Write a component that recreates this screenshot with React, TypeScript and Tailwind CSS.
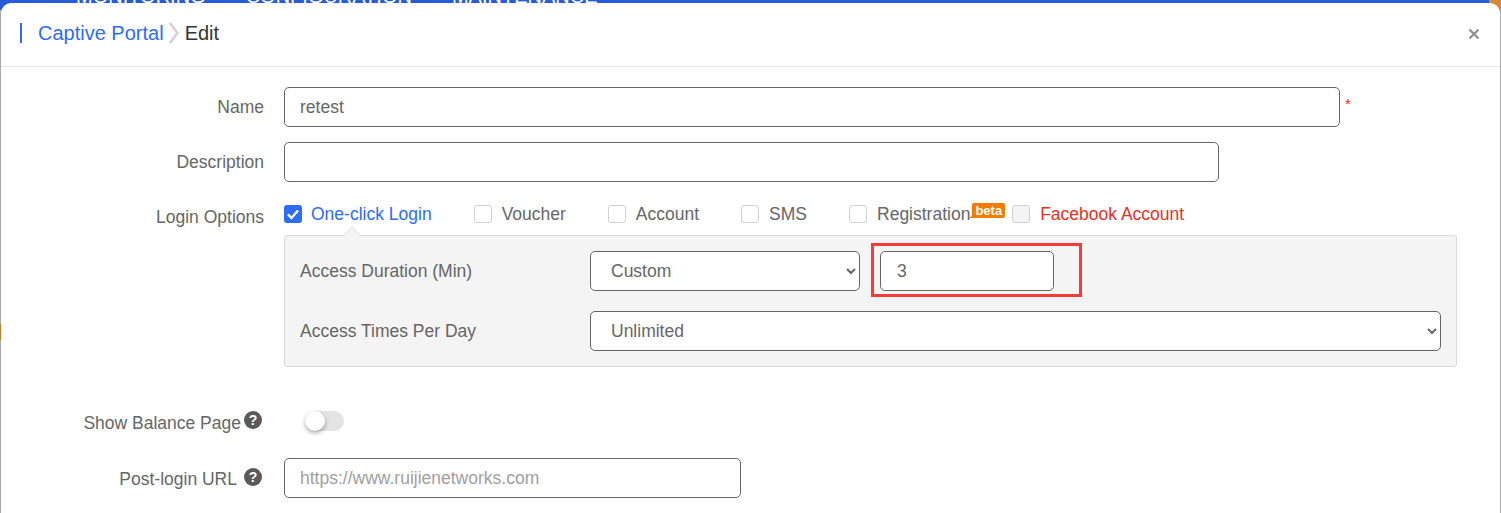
import React from "react";

function Help() {
  return (
    <svg width="18" height="18" viewBox="0 0 18 18" className="shrink-0">
      <circle cx="9" cy="9" r="9" fill="#5a5a5a" />
      <text x="9" y="14" textAnchor="middle" fontSize="14" fontWeight="700" fill="#fff" fontFamily="Liberation Sans">?</text>
    </svg>
  );
}

function Check({ checked, disabled, label, className, gap }: { checked?: boolean; disabled?: boolean; label: string; className: string; gap: string }) {
  return (
    <div className={`flex items-center ${gap}`}>
      {checked ? (
        <span className="flex h-[18px] w-[18px] items-center justify-center rounded-[3px] bg-[#2f6cf6]">
          <svg width="14" height="14" viewBox="0 0 14 14" fill="none" stroke="#fff" strokeWidth="2.4"><path d="M2 7.4 5.5 11 12 3.5" /></svg>
        </span>
      ) : (
        <span className={`h-[18px] w-[18px] rounded-[3px] border border-[#d0d0d0] ${disabled ? "bg-[#f3f3f3]" : "bg-white"}`} />
      )}
      <span className={`text-[17.5px] leading-[20px] ${className}`}>{label}</span>
    </div>
  );
}

const box = "h-[40px] rounded-[5px] border border-[#666] bg-white px-[15px] text-[17.5px] text-[#666] outline-none";

export default function App() {
  return (
    <div className="relative h-[513px] w-[1501px] overflow-hidden bg-[#a9a9a9] font-['Liberation_Sans',Arial,sans-serif]">
      <div className="flex h-[10px] items-end gap-[40px] overflow-hidden bg-[#2a5bd7] pl-[76px] text-[20px] leading-[26px] text-white">
        <span className="-translate-y-[1px]">MONITORING</span>
        <span className="-translate-y-[1px]">CONFIGURATION</span>
        <span className="-translate-y-[1px]">MAINTENANCE</span>
      </div>
      <div className="absolute left-0 top-[324px] h-[16px] w-[2px] bg-[#c47a35]" />
      <div className="absolute right-0 top-0 h-[10px] w-[12px] bg-[#d08a38]" />
      <div className="absolute left-[1px] top-[3px] h-[520px] w-[1499px] rounded-t-[10px] bg-white">
        <div className="flex h-[64px] items-center border-b border-[#e5e5e5] pb-[3px] pl-[19px] pr-[19px]">
          <span className="h-[20px] w-[2px] bg-[#2f6cf6]" />
          <span className="ml-[16px] text-[20px] text-[#2f6cf6]">Captive Portal</span>
          <svg width="12" height="24" viewBox="0 0 12 24" fill="none" stroke="#d2d2d2" strokeWidth="2.6" className="ml-[4px]"><path d="M2 2l7.5 10L2 22" /></svg>
          <span className="ml-[5px] text-[20px] text-[#333]">Edit</span>
          <svg width="12" height="12" viewBox="0 0 12 12" fill="none" stroke="#8f8f8f" strokeWidth="2.2" className="ml-auto mr-[1px] mt-[1px]"><path d="M1.5 1.5l9 9M10.5 1.5l-9 9" /></svg>
        </div>

        <div className="flex flex-col pt-[20px]">
          <div className="flex h-[40px] items-center">
            <label className="w-[263px] text-right text-[17.5px] text-[#666]">Name</label>
            <input readOnly value="retest" className={`${box} ml-[20px] w-[1056px]`} />
            <span className="mb-[7px] ml-[5px] text-[15px] leading-none text-[#f5222d]">*</span>
          </div>
          <div className="mt-[15px] flex h-[40px] items-center">
            <label className="w-[263px] text-right text-[17.5px] text-[#666]">Description</label>
            <input readOnly className={`${box} ml-[20px] w-[935px]`} />
          </div>
          <div className="mt-[24px] flex items-start">
            <label className="w-[263px] pt-[1px] text-right text-[17.5px] leading-[20px] text-[#666]">Login Options</label>
            <div className="ml-[20px] w-[1173px]">
              <div className="flex h-[20px] items-center -translate-y-[2px]">
                <Check gap="gap-[9px]" checked label="One-click Login" className="text-[#2f6cf6]" />
                <div className="ml-[42px]"><Check gap="gap-[10px]" label="Voucher" className="text-[#666]" /></div>
                <div className="ml-[42px]"><Check gap="gap-[10px]" label="Account" className="text-[#666]" /></div>
                <div className="ml-[42px]"><Check gap="gap-[10px]" label="SMS" className="text-[#666]" /></div>
                <div className="ml-[42px]"><Check gap="gap-[10px]" label="Registration" className="text-[#666]" /></div>
                <span className="relative -top-[4px] ml-[2px] rounded-[2px] bg-[#f07c00] px-[3px] text-[13px] font-bold leading-[15px] text-white">
                  beta
                  <span className="absolute -left-[3px] bottom-0 h-0 w-0 border-b-[3px] border-l-[4px] border-b-[#f07c00] border-l-transparent" />
                </span>
                <div className="ml-[7px]"><Check gap="gap-[10px]" disabled label="Facebook Account" className="text-[#e8321f]" /></div>
              </div>
              <div className="relative mt-[9px] h-[132px] rounded-[3px] border border-[#d9d9d9] bg-[#f4f4f4] pl-[15px] pt-[15px]">
                <span className="absolute -top-[7px] left-[61px] h-[12px] w-[12px] rotate-45 border-l border-t border-[#e8e8e8] bg-[#f4f4f4]" />
                <div className="flex h-[40px] items-center">
                  <span className="w-[290px] text-[17.5px] text-[#666]">Access Duration (Min)</span>
                  <select defaultValue="Custom" className={`${box} w-[270px] pl-[16px] pr-0`}><option>Custom</option></select>
                  <div className="relative ml-[20px]">
                    <input readOnly value="3" className={`${box} block w-[174px] pl-[16px]`} />
                    <span className="pointer-events-none absolute -left-[9px] -top-[8px] h-[54px] w-[211px] border-[3px] border-[#f53c3c]" />
                  </div>
                </div>
                <div className="mt-[20px] flex h-[40px] items-center">
                  <span className="w-[290px] text-[17.5px] text-[#666]">Access Times Per Day</span>
                  <select defaultValue="Unlimited" className={`${box} w-[851px] pl-[16px] pr-0`}><option>Unlimited</option></select>
                </div>
              </div>
            </div>
          </div>
          <div className="mt-[44px] flex h-[20px] items-center">
            <div className="flex w-[263px] items-center justify-end pr-[2px]">
              <span className="mt-[4px] text-[17.5px] text-[#666]">Show Balance Page</span>
              <span className="mb-[3px] ml-[3px]"><Help /></span>
            </div>
            <div className="relative ml-[41px] h-[20px] w-[39px] rounded-full bg-[#e4e4e4]">
              <span className="absolute left-0 top-0 h-[20px] w-[20px] rounded-full bg-white shadow-[0_2px_4px_rgba(0,0,0,0.35)]" />
            </div>
          </div>
          <div className="mt-[27px] flex h-[40px] items-center">
            <div className="flex w-[263px] items-center justify-end pr-[2px]">
              <span className="mt-[2px] text-[17.5px] text-[#666]">Post-login URL</span>
              <span className="mb-[3px] ml-[7px]"><Help /></span>
            </div>
            <input readOnly placeholder="https://www.ruijienetworks.com" className={`${box} ml-[20px] w-[457px] placeholder:text-[#a0a0a0]`} />
          </div>
        </div>
      </div>
    </div>
  );
}
